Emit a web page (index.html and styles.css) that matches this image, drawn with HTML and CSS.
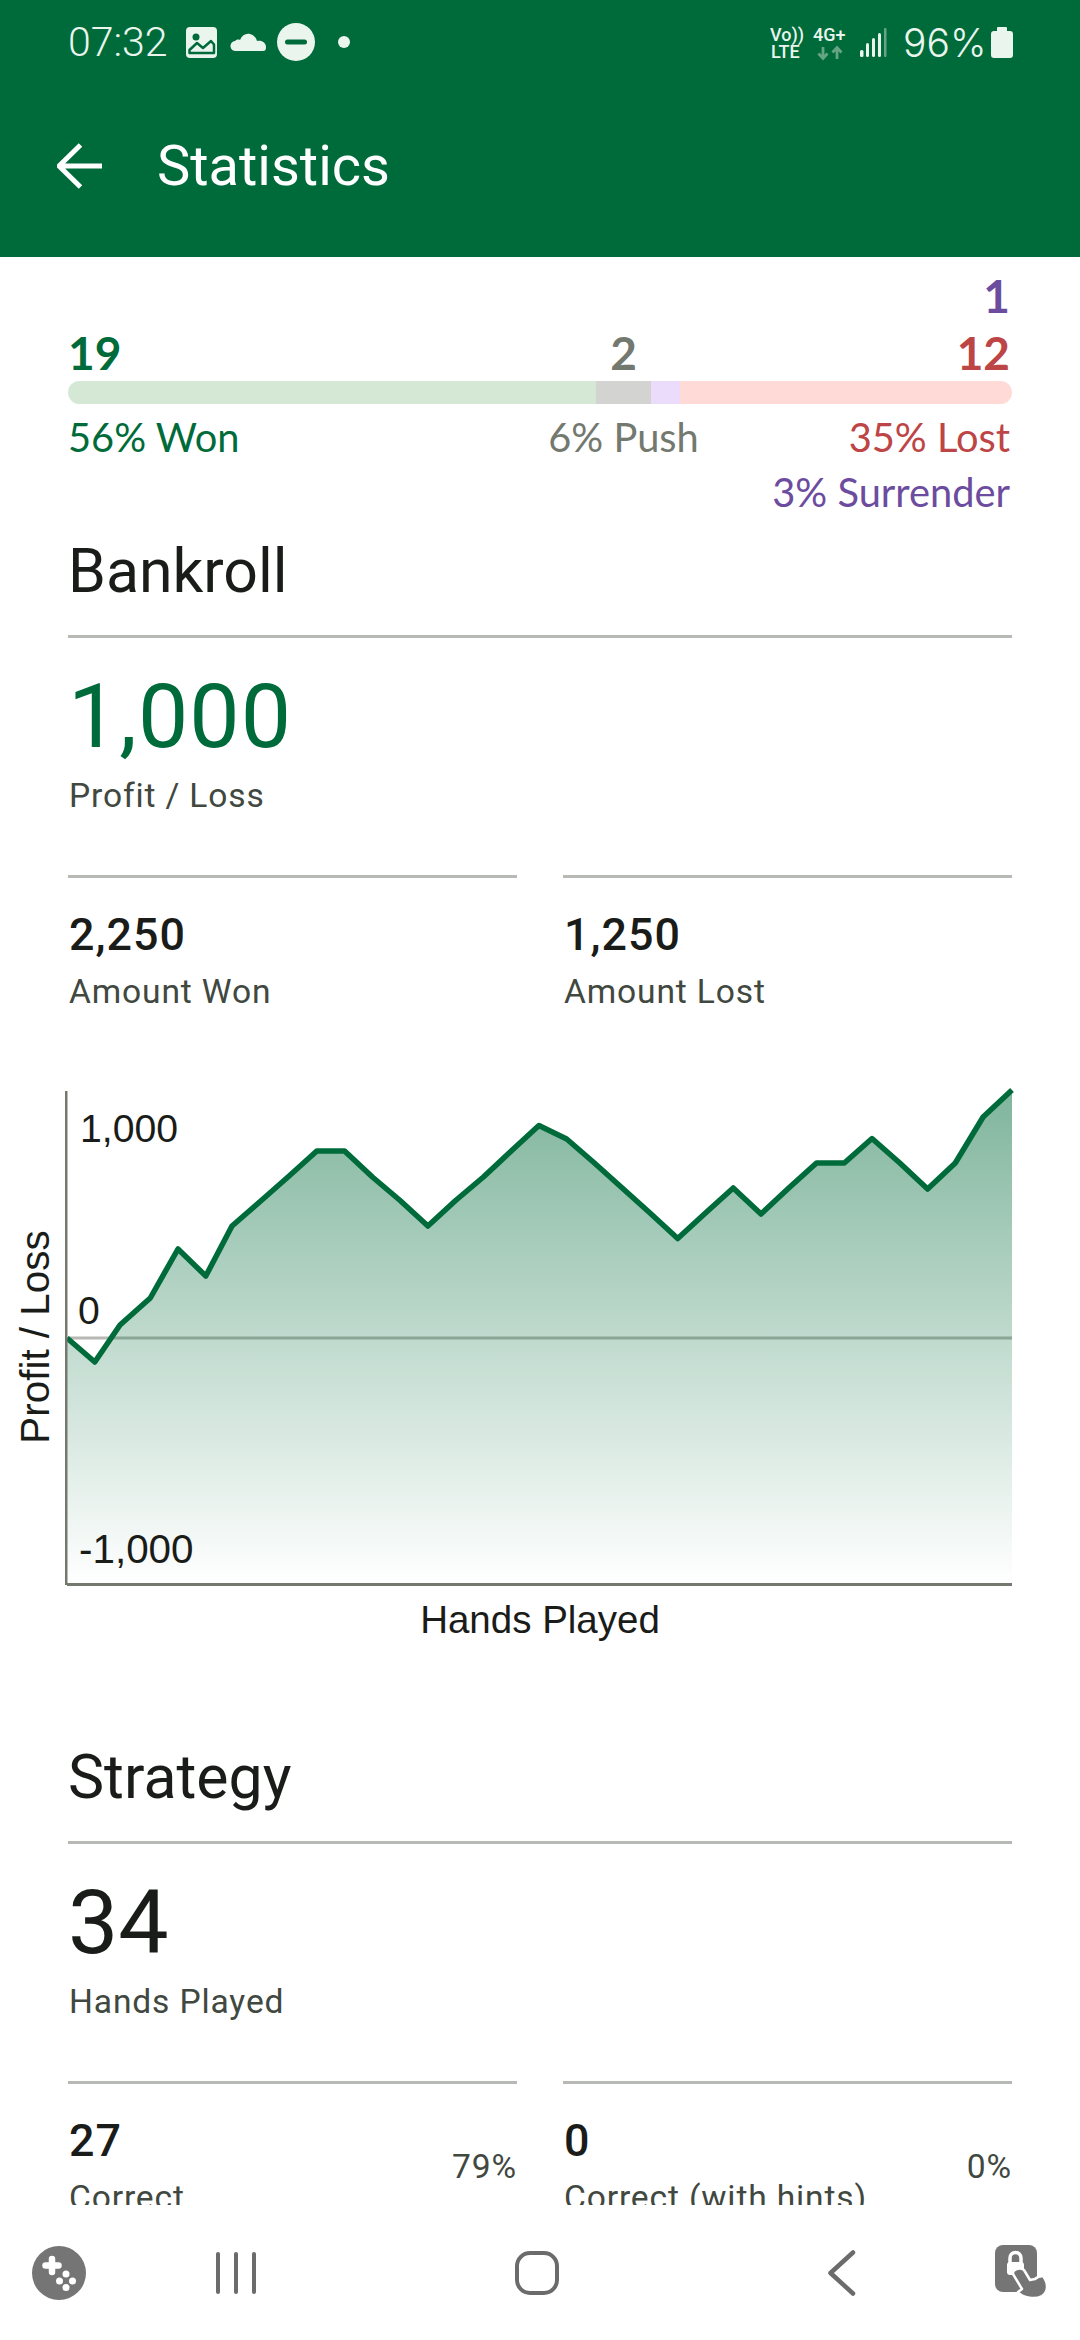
FILE: index.html
```html
<!DOCTYPE html>
<html lang="en">
<head>
    <meta charset="UTF-8">
    <meta name="viewport" content="width=device-width, initial-scale=1.0">
    <title>Statistics</title>
    <link rel="stylesheet" href="styles.css">
</head>
<body>
    <header class="app-header">
        <div class="status-bar">
            <span class="status-time">07:32</span>
            <svg class="status-left-icons" width="164" height="40" viewBox="186 22 164 40">
                <rect x="186" y="27" width="31" height="31" rx="4" fill="#eaf5ee"/>
                <circle cx="196" cy="37" r="3.5" fill="#006b3a"/>
                <path d="M189.500 53V50L197 43L203 48L211 41L214 44.500V53Z" fill="#eaf5ee" stroke="#006b3a" stroke-width="2.500" stroke-linejoin="round"/>
                <path d="M236 51a5 5 0 0 1-1-10c1-1 3-2 5-1c2-5 6-7 10-6c4 1 6 4 7 7c5-1 9 2 9 6c0 3-1 4-3 4z" fill="#eaf5ee"/>
                <circle cx="296" cy="42" r="19" fill="#eaf5ee"/>
                <rect x="285" y="39.500" width="22" height="5" rx="2.500" fill="#006b3a"/>
                <circle cx="344" cy="42" r="6" fill="#eaf5ee"/>
            </svg>
            <svg class="status-right-icons" width="118" height="40" viewBox="770 22 118 40">
                <text class="net-label" x="770" y="41">Vo))</text>
                <text class="net-label" x="771" y="58">LTE</text>
                <text class="net-label" x="813" y="41">4G+</text>
                <path d="M823 47V58M818.500 53.500L823 58.500L827.500 53.500M837 59V48M832.500 52.500L837 47.500L841.500 52.500" fill="none" stroke="#66a486" stroke-width="2.800"/>
                <g fill="#eaf5ee">
                    <rect x="860" y="50" width="3.500" height="7" rx="1.500"/>
                    <rect x="866" y="43" width="3" height="14" rx="1.500"/>
                    <rect x="872" y="38" width="3" height="19" rx="1.500"/>
                    <rect x="878" y="33" width="3" height="24" rx="1.500"/>
                </g>
                <rect x="884" y="28" width="2.500" height="29" rx="1" fill="#66a486"/>
            </svg>
            <span class="status-battery-text">96%</span>
            <svg class="status-battery" width="22" height="31" viewBox="0 0 22 31">
                <path d="M7 0h8a1 1 0 0 1 1 1v3h3a3 3 0 0 1 3 3v21a3 3 0 0 1-3 3H3a3 3 0 0 1-3-3V7a3 3 0 0 1 3-3h3V1a1 1 0 0 1 1-1z" fill="#eaf5ee"/>
            </svg>
        </div>
        <div class="toolbar">
            <svg class="back-arrow" width="46" height="46" viewBox="0 0 46 46">
                <path d="M2 23H45M23.500 2L2 23L23.500 44" fill="none" stroke="#fff" stroke-width="5"/>
            </svg>
            <h1>Statistics</h1>
        </div>
    </header>

    <main class="content">
        <section class="tally">
            <div class="tally-single surrender">1</div>
            <div class="tally-row tally-counts">
                <span class="won">19</span>
                <span class="push middle">2</span>
                <span class="lost end">12</span>
            </div>
            <div class="tally-bar">
                <div class="seg seg-won"></div>
                <div class="seg seg-push"></div>
                <div class="seg seg-surrender"></div>
                <div class="seg seg-lost"></div>
            </div>
            <div class="tally-row tally-labels">
                <span class="won">56% Won</span>
                <span class="push middle">6% Push</span>
                <span class="lost end">35% Lost</span>
            </div>
            <div class="tally-single tally-note surrender">3% Surrender</div>
        </section>

        <section class="stat-section">
            <h2>Bankroll</h2>
            <div class="big-stat">
                <div class="big-number green">1,000</div>
                <div class="stat-label">Profit / Loss</div>
            </div>
            <div class="stat-columns">
                <div class="stat-col">
                    <div class="stat-number">2,250</div>
                    <div class="stat-label">Amount Won</div>
                </div>
                <div class="stat-col">
                    <div class="stat-number">1,250</div>
                    <div class="stat-label">Amount Lost</div>
                </div>
            </div>
        </section>

        <svg class="chart" width="1080" height="600" viewBox="0 1060 1080 600">
            <defs>
                <linearGradient id="chartFill" gradientUnits="userSpaceOnUse" x1="0" y1="1089" x2="0" y2="1583">
                    <stop offset="0" stop-color="#006b3a" stop-opacity="0.5"/>
                    <stop offset="1" stop-color="#006b3a" stop-opacity="0"/>
                </linearGradient>
            </defs>
            <rect x="68" y="1335.500" width="944" height="3" fill="#b7bab4"/>
            <polygon fill="url(#chartFill)" points="67,1337 94.800,1361 120,1324 150.300,1297 178,1248 205.800,1275 232,1225 261.300,1199.500 289.100,1175 316.800,1150 344.600,1150 372.400,1176 400.100,1199.500 427.900,1225 455.600,1199.500 483.400,1176 511.200,1150 538.900,1124.500 566.700,1138 594.400,1162 622.200,1187 650,1212 677.700,1237.500 705.500,1212 733.200,1187 761,1213 788.800,1187 816.500,1162 844.300,1162 872,1137.500 899.800,1162 927.600,1188 955.300,1162 983.100,1116 1012,1089 1012,1583 67,1583"/>
            <polyline fill="none" stroke="#006b3a" stroke-width="5.500" stroke-linejoin="round" points="67,1337 94.800,1361 120,1324 150.300,1297 178,1248 205.800,1275 232,1225 261.300,1199.500 289.100,1175 316.800,1150 344.600,1150 372.400,1176 400.100,1199.500 427.900,1225 455.600,1199.500 483.400,1176 511.200,1150 538.900,1124.500 566.700,1138 594.400,1162 622.200,1187 650,1212 677.700,1237.500 705.500,1212 733.200,1187 761,1213 788.800,1187 816.500,1162 844.300,1162 872,1137.500 899.800,1162 927.600,1188 955.300,1162 983.100,1116 1012,1089"/>
            <rect x="65" y="1090" width="2.500" height="494" fill="#747970"/>
            <rect x="67" y="1582" width="945" height="3" fill="#747970"/>
            <text class="chart-text tick-text" x="80" y="1141">1,000</text>
            <text class="chart-text tick-text" x="78" y="1323">0</text>
            <text class="chart-text tick-low" x="79" y="1562">-1,000</text>
            <text class="chart-text axis-x" x="540" y="1632" text-anchor="middle">Hands Played</text>
            <text class="chart-text axis-y" transform="translate(49 1336) rotate(-90)" text-anchor="middle">Profit / Loss</text>
        </svg>

        <section class="stat-section strategy">
            <h2>Strategy</h2>
            <div class="big-stat">
                <div class="big-number">34</div>
                <div class="stat-label">Hands Played</div>
            </div>
            <div class="stat-columns">
                <div class="stat-col stat-col-split">
                    <div>
                        <div class="stat-number">27</div>
                        <div class="stat-label">Correct</div>
                    </div>
                    <div class="stat-label stat-percent">79%</div>
                </div>
                <div class="stat-col stat-col-split">
                    <div>
                        <div class="stat-number">0</div>
                        <div class="stat-label">Correct (with hints)</div>
                    </div>
                    <div class="stat-label stat-percent">0%</div>
                </div>
            </div>
        </section>
    </main>

    <nav class="nav-bar">
        <svg width="54" height="54" viewBox="0 0 54 54">
            <circle cx="27" cy="27" r="27" fill="#757575"/>
            <path d="M20 13V26M13.500 19.500H26.500" stroke="#fff" stroke-width="6.500" stroke-linecap="round"/>
            <g fill="#fff">
                <circle cx="34" cy="28" r="3.500"/>
                <circle cx="27.500" cy="35" r="3.500"/>
                <circle cx="40.500" cy="35" r="3.500"/>
                <circle cx="34" cy="41.500" r="3.500"/>
            </g>
        </svg>
        <svg width="40" height="42" viewBox="0 0 40 42">
            <path d="M2 2V40M20 2V40M38 2V40" stroke="#6b6b6b" stroke-width="4" stroke-linecap="round"/>
        </svg>
        <svg width="44" height="44" viewBox="0 0 44 44">
            <rect x="2" y="2" width="40" height="40" rx="13" fill="none" stroke="#6b6b6b" stroke-width="4"/>
        </svg>
        <svg width="28" height="46" viewBox="0 0 28 46">
            <path d="M25 2.500L2.500 23L25 43.500" fill="none" stroke="#6b6b6b" stroke-width="4.500" stroke-linecap="round" stroke-linejoin="round"/>
        </svg>
        <svg width="54" height="56" viewBox="0 0 54 56">
            <rect x="0" y="0" width="42" height="47" rx="8" fill="#757575"/>
            <path d="M15 18v-5a5.500 5.500 0 0 1 11 0v5" fill="none" stroke="#fff" stroke-width="3.500"/>
            <rect x="12" y="17" width="17" height="13" rx="3" fill="#fff"/>
            <path d="M18 29L27 44L23 47C28 53 40 55 47 51C53 47 54 39 48 31C45 31 42 32 40 34L35 35L29 25C25 22 17 24 18 29Z" fill="#757575" stroke="#fff" stroke-width="2.500" stroke-linejoin="round"/>
        </svg>
    </nav>
</body>
</html>
```

FILE: styles.css
```css
* {
    box-sizing: border-box;
}

body {
    margin: 0;
    width: 1080px;
    height: 2340px;
    display: flex;
    flex-direction: column;
    overflow: hidden;
    background-color: #fff;
    font-family: Roboto, sans-serif;
    color: #1a1c19;
}

/* Header */
.app-header {
    height: 257px;
    flex: none;
    background-color: #006b3a;
    color: #fff;
}

.status-bar {
    height: 84px;
    display: flex;
    align-items: center;
    padding: 0 67px 0 68px;
    color: #eaf5ee;
    font-size: 41px;
    font-weight: 300;
}

.status-time {
    width: 118px;
}

.status-right-icons {
    margin-left: auto;
}

.status-battery-text {
    margin-left: 15px;
    width: 88px;
    font-family: Inter, sans-serif;
    font-size: 39px;
}

.net-label {
    font-size: 18px;
    font-weight: 500;
    fill: #eaf5ee;
}

.toolbar {
    height: 164px;
    display: flex;
    align-items: center;
    padding-left: 57px;
}

.back-arrow {
    margin-right: 54px;
}

.toolbar h1 {
    margin: 0;
    font-size: 56px;
    font-weight: 400;
}

/* Main scroll area */
.content {
    flex: 1;
    overflow: hidden;
}

.tally {
    padding: 10px 68px 0;
    font-family: Lato, sans-serif;
}

.tally-single {
    text-align: right;
    padding-right: 2px;
    font-size: 46px;
    font-weight: 700;
    line-height: 57px;
}

.tally-row {
    display: grid;
    grid-template-columns: 528px 55px 1fr;
    line-height: 57px;
}

.tally-counts {
    font-size: 46px;
    font-weight: 700;
}

.tally-labels {
    margin-top: 5px;
    font-size: 39.800px;
    line-height: 55px;
}

.tally-single.tally-note {
    font-size: 39.800px;
    font-weight: 400;
    line-height: 56px;
}

.middle {
    display: flex;
    justify-content: center;
    white-space: nowrap;
}

.end {
    text-align: right;
    padding-right: 2px;
}

.won { color: #006b3a; }
.push { color: #747970; }
.lost { color: #bd4545; }
.surrender { color: #6c4c9e; }

.tally-bar {
    display: flex;
    height: 23px;
    border-radius: 12px;
    overflow: hidden;
}

.seg-won { width: 528px; background-color: #d5e8d6; }
.seg-push { width: 55px; background-color: #d3d3d1; }
.seg-surrender { width: 29px; background-color: #ebdcfb; }
.seg-lost { flex: 1; background-color: #ffdad6; }

/* Stat sections */
.stat-section {
    padding: 16px 68px 0;
}

.stat-section.strategy {
    padding-top: 81px;
}

h2 {
    margin: 0;
    font-size: 60.800px;
    font-weight: 400;
    line-height: 72px;
}

.big-stat {
    margin-top: 27px;
    padding-top: 27px;
    border-top: 3px solid #b7bab4;
}

.big-number {
    font-size: 89.600px;
    line-height: 104px;
}

.green {
    color: #006b3a;
    letter-spacing: 1px;
}

.stat-label {
    margin-top: 5px;
    padding-left: 1px;
    font-size: 33.600px;
    line-height: 44px;
    letter-spacing: 0.850px;
    color: #41483f;
}

.stat-columns {
    display: grid;
    grid-template-columns: 449px 449px;
    column-gap: 46px;
    margin-top: 57px;
}

.stat-col {
    padding-top: 29px;
    border-top: 3px solid #b7bab4;
}

.stat-col-split {
    display: flex;
    justify-content: space-between;
    align-items: center;
}

.stat-number {
    padding-left: 1px;
    font-size: 44.800px;
    font-weight: 500;
    line-height: 56px;
    letter-spacing: 1px;
}

.stat-col .stat-label {
    margin-top: 7px;
}

.stat-col .stat-percent {
    margin-top: 0;
}

/* Bottom navigation */
.nav-bar {
    height: 135px;
    flex: none;
    display: grid;
    grid-template-columns: 118px 236px 366px 244px 116px;
    align-items: center;
    justify-items: center;
    background-color: #fff;
}

/* Chart */
.chart {
    display: block;
    margin-top: 47px;
}

.chart-text {
    font-family: "Liberation Sans", sans-serif;
    fill: #1a1c19;
}

.tick-text {
    font-size: 39.200px;
}

.tick-low {
    font-size: 40.400px;
}

.axis-x {
    font-size: 38.500px;
}

.axis-y {
    font-size: 40.400px;
}
```
